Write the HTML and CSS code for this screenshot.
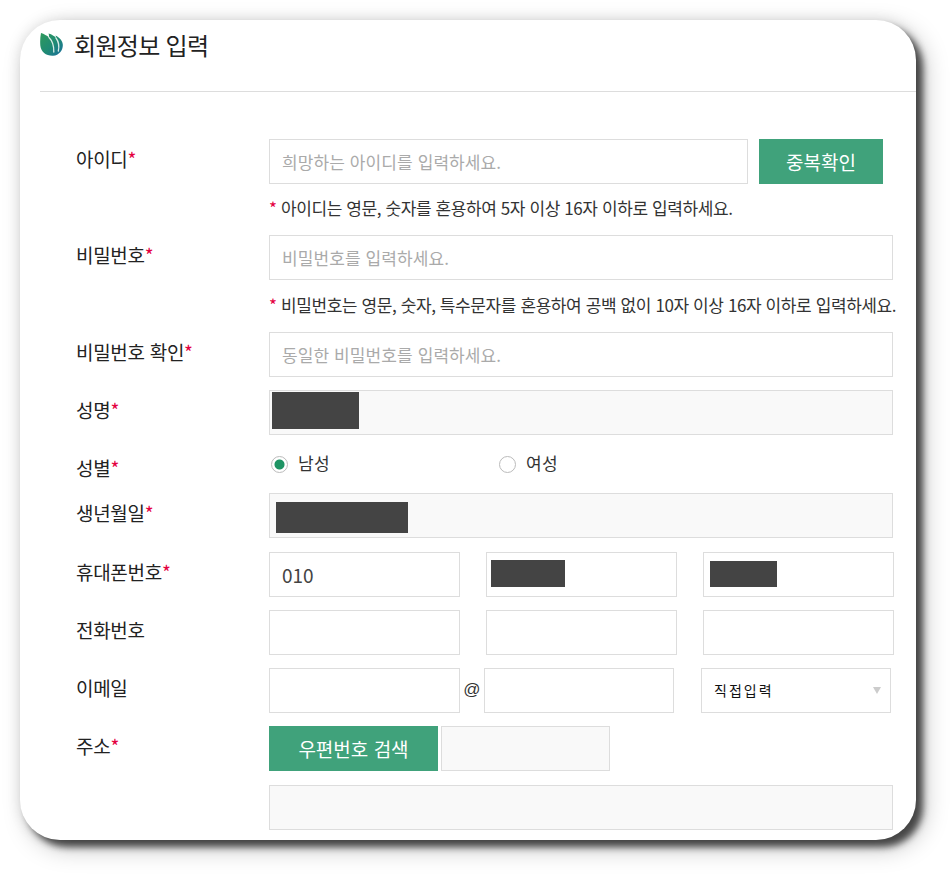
FILE: index.html
```html
<!DOCTYPE html>
<html lang="ko">
<head>
<meta charset="utf-8">
<title>회원정보 입력</title>
<link rel="stylesheet" href="styles.css">
</head>
<body>
<main class="card">
  <header class="head">
    <svg class="leaf" viewBox="0 0 23 23" aria-hidden="true">
      <defs>
        <linearGradient id="lg" x1="0" y1="0" x2="1" y2="1">
          <stop offset="0" stop-color="#2f9a5c"/>
          <stop offset=".55" stop-color="#1f8a74"/>
          <stop offset="1" stop-color="#1b6ea0"/>
        </linearGradient>
      </defs>
      <path fill="url(#lg)" d="M1 0C4 1 7 2.500 9 4.500C9 3 9 1.500 8.500 .5C12 1.500 14.500 3 16 5C16 4 15.800 3.500 15.500 2.500C19.500 4.500 22.500 7.500 22.800 11.500C23.200 16.500 19.500 22.500 13 22.800C6 23 1 19 .3 12.500C0 8 .2 4 1 0Z"/>
      <path fill="none" stroke="#d8ece6" stroke-width="1.300" stroke-linecap="round" d="M9 4.500C12.500 8 14 13 13.800 19"/>
      <path fill="none" stroke="#d8ece6" stroke-width="1.300" stroke-linecap="round" d="M16 5C18.500 8.500 19.500 13 18.300 18"/>
    </svg>
    <h1 class="title">회원정보 입력</h1>
  </header>
  <form class="form">
    <div class="row">
      <div class="label">아이디<em>*</em></div>
      <div class="fields">
        <input class="input w-id" placeholder="희망하는 아이디를 입력하세요.">
        <button type="button" class="btn btn-check">중복확인</button>
      </div>
    </div>
    <p class="hint"><em>*</em> 아이디는 영문, 숫자를 혼용하여 5자 이상 16자 이하로 입력하세요.</p>
    <div class="row">
      <div class="label">비밀번호<em>*</em></div>
      <div class="fields"><input class="input w-full" placeholder="비밀번호를 입력하세요."></div>
    </div>
    <p class="hint hint-wide"><em>*</em> 비밀번호는 영문, 숫자, 특수문자를 혼용하여 공백 없이 10자 이상 16자 이하로 입력하세요.</p>
    <div class="row">
      <div class="label">비밀번호 확인<em>*</em></div>
      <div class="fields"><input class="input w-full" placeholder="동일한 비밀번호를 입력하세요."></div>
    </div>
    <div class="row">
      <div class="label">성명<em>*</em></div>
      <div class="fields">
        <div class="slot w-full"><input class="input fill ro" readonly><span class="mask mask-name"></span></div>
      </div>
    </div>
    <div class="row row-gender">
      <div class="label">성별<em>*</em></div>
      <div class="fields radios">
        <label class="radio"><input type="radio" name="g" checked><span>남성</span></label>
        <label class="radio"><input type="radio" name="g"><span>여성</span></label>
      </div>
    </div>
    <div class="row row-a">
      <div class="label">생년월일<em>*</em></div>
      <div class="fields">
        <div class="slot w-full"><input class="input fill ro" readonly><span class="mask mask-birth"></span></div>
      </div>
    </div>
    <div class="row">
      <div class="label">휴대폰번호<em>*</em></div>
      <div class="fields gap-phone">
        <input class="input w-phone num" value="010">
        <div class="slot w-phone"><input class="input fill"><span class="mask mask-p2"></span></div>
        <div class="slot w-phone"><input class="input fill"><span class="mask mask-p3"></span></div>
      </div>
    </div>
    <div class="row">
      <div class="label">전화번호</div>
      <div class="fields gap-phone">
        <input class="input w-phone">
        <input class="input w-phone">
        <input class="input w-phone">
      </div>
    </div>
    <div class="row">
      <div class="label">이메일</div>
      <div class="fields">
        <input class="input w-phone">
        <span class="at">@</span>
        <input class="input w-mail">
        <div class="select">직접입력<i class="caret"></i></div>
      </div>
    </div>
    <div class="row row-a">
      <div class="label">주소<em>*</em></div>
      <div class="fields">
        <button type="button" class="btn btn-zip">우편번호 검색</button>
        <input class="input ro w-zip" readonly>
      </div>
    </div>
    <div class="row row-last">
      <div class="label"></div>
      <div class="fields"><input class="input ro w-full" readonly></div>
    </div>
  </form>
</main>
</body>
</html>
```
FILE: styles.css
```css
* { box-sizing: border-box; }
html, body { margin: 0; padding: 0; background: #fff; }
body {
  width: 950px;
  height: 875px;
  padding: 20px 0 0 20px;
  overflow: hidden;
  font-family: "Noto Sans CJK KR", "Noto Sans", sans-serif;
  color: #333;
}
.card {
  width: 896px;
  height: 820px;
  background: #fff;
  border-radius: 40px;
  box-shadow: 7px 7px 7px rgba(0, 0, 0, .65), 8px 8px 24px rgba(0, 0, 0, .25), 0 0 14px rgba(0, 0, 0, .1);
}
.head {
  margin-left: 20px;
  height: 72px;
  border-bottom: 1px solid #ddd;
  display: flex;
  align-items: flex-start;
  padding-top: 13px;
  gap: 11px;
}
.leaf { width: 23px; height: 23px; flex: none; }
.title {
  margin: 0;
  font-size: 24px;
  line-height: 24px;
  font-weight: 400;
  letter-spacing: -.7px;
  color: #222;
}
.form { padding: 47px 0 0 56px; }
.row {
  display: grid;
  grid-template-columns: 193px 1fr;
  margin-bottom: 13px;
}
.row-a { margin-bottom: 14px; }
.row-last { margin-bottom: 0; }
.row-gender { height: 32px; }
.label {
  font-size: 19px;
  line-height: 40px;
  font-weight: 400;
  letter-spacing: -.3px;
  color: #222;
}
em { font-style: normal; color: #e4003f; }
.fields { display: flex; align-items: flex-start; }
.gap-phone { gap: 26px; }
.input {
  height: 45px;
  border: 1px solid #ddd;
  background: #fff;
  padding: 0 12px;
  margin: 0;
  border-radius: 0;
  outline: 0;
  font: 400 17px "Noto Sans CJK KR", sans-serif;
  letter-spacing: .1px;
  color: #444;
}
.num { font-size: 19px; letter-spacing: 0; }
.input::placeholder { color: #aaa; opacity: 1; }
.ro { background: #f9f9f9; }
.w-id { width: 479px; }
.w-full { width: 624px; }
.w-phone { width: 191px; }
.w-mail { width: 190px; }
.w-zip { width: 169px; margin-left: 3px; }
.fill { width: 100%; display: block; }
.slot { position: relative; height: 45px; }
.mask { position: absolute; background: #444; }
.mask-name { left: 3px; top: 2px; width: 87px; height: 37px; }
.mask-birth { left: 7px; top: 9px; width: 132px; height: 31px; }
.mask-p2 { left: 5px; top: 8px; width: 74px; height: 27px; }
.mask-p3 { left: 7px; top: 9px; width: 67px; height: 26px; }
.btn {
  height: 45px;
  border: 0;
  margin: 0;
  padding: 0;
  background: #40a27b;
  color: #fff;
  font: 400 19px "Noto Sans CJK KR", sans-serif;
}
.btn-check { width: 124px; margin-left: 11px; }
.btn-zip { width: 169px; }
.hint {
  margin: 0 0 16px 193px;
  height: 22px;
  font-size: 17px;
  line-height: 22px;
  letter-spacing: -.4px;
  color: #333;
  white-space: nowrap;
}
.hint-wide { height: 24px; line-height: 24px; margin-bottom: 15px; }
.radios { height: 32px; }
.radio {
  display: flex;
  align-items: center;
  width: 228px;
  height: 32px;
  padding-left: 2px;
  gap: 10px;
  font-size: 17px;
  color: #333;
}
.radio span { padding-bottom: 4px; letter-spacing: .3px; }
.radio input {
  appearance: none;
  width: 17px;
  height: 17px;
  margin: 0;
  border: 1px solid #bbb;
  border-radius: 50%;
  background: #fff;
  flex: none;
}
.radio input:checked {
  background: radial-gradient(circle, #1e9464 0, #1e9464 4.5px, #fff 5.500px);
}
.at {
  width: 24px;
  height: 45px;
  line-height: 43px;
  text-align: center;
  font-family: "Liberation Sans", sans-serif;
  font-size: 17px;
  color: #333;
}
.select {
  position: relative;
  width: 190px;
  height: 45px;
  margin-left: 27px;
  border: 1px solid #ddd;
  background: #fff;
  padding-left: 12px;
  font-size: 14px;
  line-height: 43px;
  letter-spacing: 2px;
  color: #111;
}
.caret {
  position: absolute;
  right: 9px;
  top: 18px;
  width: 0;
  height: 0;
  border: 4.500px solid transparent;
  border-top: 7px solid #ccc;
  border-bottom: 0;
}
```
